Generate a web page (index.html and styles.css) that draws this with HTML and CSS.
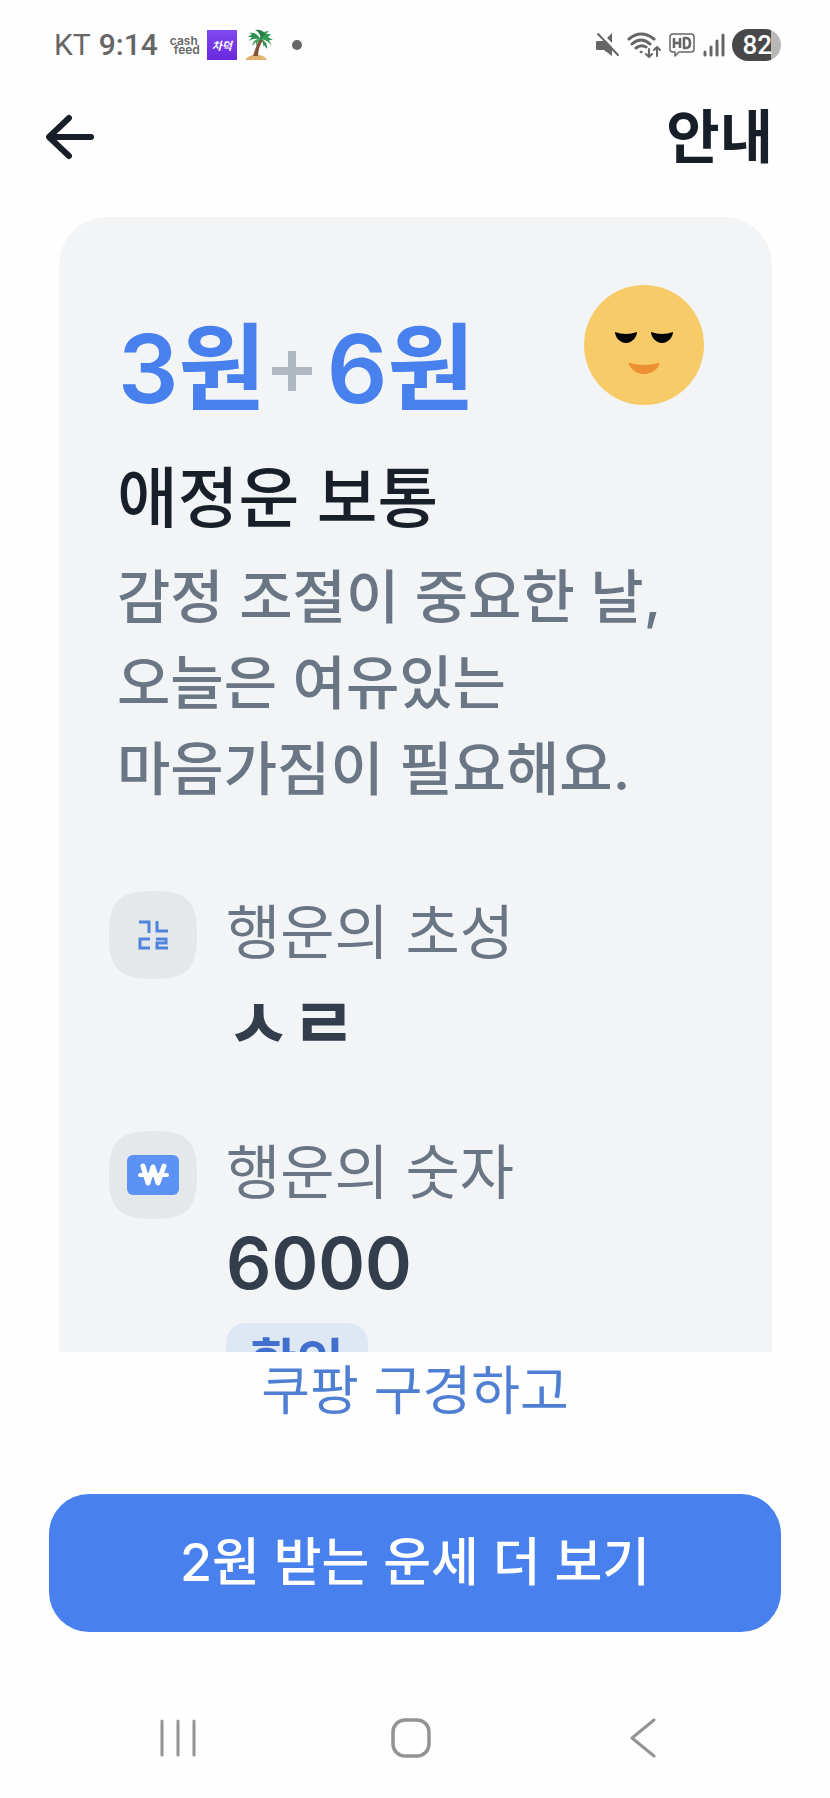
FILE: index.html
```html
<!DOCTYPE html>
<html lang="ko">
<head>
<meta charset="utf-8">
<meta name="viewport" content="width=device-width, initial-scale=1">
<title>안내</title>
<link rel="stylesheet" href="styles.css">
</head>
<body>
<div class="app">
  <div class="status">
    <div class="status-left">
      <span class="carrier">KT</span>
      <span class="clock">9:14</span>
      <span class="cashfeed"><span>cash</span><span class="feed">feed</span></span>
      <span class="chadeok">차덕</span>
      <svg class="palm" width="30" height="32" viewBox="0 0 30 32" aria-hidden="true">
        <path d="M1 31Q4 26 12 26Q21 26 23 31Z" fill="#e2b273"/>
        <path d="M9 27Q12 17 16 9L19 11Q14 19 14 27Z" fill="#854e39"/>
        <path d="M17 11Q12 2 5 4L8 5L4 8L8 8L5 12Q11 8 17 11Z" fill="#2f8f4e"/>
        <path d="M18 10Q10 8 8 17L12 13L12 18Q13 12 18 10Z" fill="#3ca45c"/>
        <path d="M16 10Q17 2 25 2L22 5L27 5L24 8L29 11L25 11L28 17Q24 11 16 10Z" fill="#349a54"/>
        <path d="M17 10Q16 3 11 1Q18 0 21 5Z" fill="#277b43"/>
        <path d="M16 9Q24 13 23 20L20 16L19 18Q20 13 16 9Z" fill="#2f8f4e"/>
      </svg>
      <span class="dot"></span>
    </div>
    <div class="status-right">
      <svg width="24" height="26" viewBox="0 0 24 26" aria-hidden="true">
        <path d="M1 9H8L16 1V24L8 18H1Q0 18 0 17V10Q0 9 1 9Z" fill="#666"/>
        <path d="M2 -1L24 21" stroke="#fff" stroke-width="3"/>
        <path d="M2 2L22 23" stroke="#666" stroke-width="2" stroke-linecap="round"/>
      </svg>
      <svg width="34" height="28" viewBox="0 0 34 28" fill="none" stroke="#666" stroke-width="3" stroke-linecap="round" stroke-linejoin="round" aria-hidden="true">
        <path d="M2 8Q14-2 27 8M5 13Q14 5 23 13M9 17Q14 13 19 16"/>
        <circle cx="14" cy="21" r="1" fill="#666" stroke-width="1"/>
        <path d="M22 18V26M19 23L22 26L25 23M30 25V16M27 19L30 16L33 19" stroke-width="2"/>
      </svg>
      <svg width="28" height="26" viewBox="0 0 28 26" fill="none" stroke="#666" stroke-width="2" stroke-linejoin="round" aria-hidden="true">
        <path d="M5 2H23Q26 2 26 5V17Q26 20 23 20H11L7 24V20H5Q2 20 2 17V5Q2 2 5 2Z" stroke-width="1.5"/>
        <path d="M6 6V16M12 6V16M6 11H12M16 6V16H18Q22 16 22 11Q22 6 18 6Z" stroke-width="2.5"/>
      </svg>
      <svg width="22" height="24" viewBox="0 0 22 24" stroke="#666" stroke-width="3" stroke-linecap="round" aria-hidden="true">
        <path d="M2 19V22M8 14V22M14 8V22M20 2V22"/>
      </svg>
      <span class="battery">82</span>
    </div>
  </div>

  <header class="header">
    <button class="icon-button" type="button" aria-label="뒤로">
      <svg width="48" height="46" viewBox="0 0 48 46" fill="none" stroke="#191f28" stroke-width="6" stroke-linecap="round" stroke-linejoin="round" aria-hidden="true">
        <path d="M23 4L3 23L23 42M4 23H45"/>
      </svg>
    </button>
    <h1 class="title">안내</h1>
  </header>

  <main class="card">
    <div class="summary">
      <p class="amount"><span>3원</span><svg class="plus" width="40" height="40" viewBox="0 0 40 40" role="img" aria-label="더하기"><path d="M20 0V40M0 20H40" stroke="#b0b8c1" stroke-width="8"/></svg><span>6원</span></p>
      <svg class="face" width="120" height="120" viewBox="0 0 120 120" aria-hidden="true">
        <circle cx="60" cy="60" r="60" fill="#f6cb68"/>
        <path d="M31 47Q42 51 53 47C53 52 48 58 42 58C36 58 31 52 31 47ZM67 47Q78 51 89 47C89 52 84 58 78 58C72 58 67 52 67 47Z" fill="#000"/>
        <path d="M45 78Q60 82 75 78C77 78 72 89 60 89C49 89 43 78 45 78Z" fill="#ed8f32"/>
      </svg>
    </div>
    <h2 class="fortune">애정운 보통</h2>
    <p class="description">감정 조절이 중요한 날,<br>오늘은 여유있는<br>마음가짐이 필요해요.</p>

    <dl class="lucky">
      <div class="lucky-row">
        <svg class="lucky-icon" viewBox="0 0 88 88" aria-hidden="true">
          <path d="M44 0C78 0 88 10 88 44S78 88 44 88S0 78 0 44S10 0 44 0Z" fill="#e5e8eb"/>
          <path d="M30 31H40V42M48 30V40H59" fill="none" stroke="#5084dc" stroke-width="3"/>
          <path d="M41 48H31V57H41M47 48H57V52H48V57H59" fill="none" stroke="#5084dc" stroke-width="3"/>
        </svg>
        <div class="lucky-text">
          <dt>행운의 초성</dt>
          <dd>ㅅㄹ</dd>
        </div>
      </div>
      <div class="lucky-row">
        <svg class="lucky-icon" viewBox="0 0 88 88" aria-hidden="true">
          <path d="M44 0C78 0 88 10 88 44S78 88 44 88S0 78 0 44S10 0 44 0Z" fill="#e5e8eb"/>
          <rect x="18" y="24" width="52" height="40" rx="6" fill="#5b92f3"/>
          <path d="M34 35L39 52L44 36L49 52L55 35" fill="none" stroke="#fff" stroke-width="5" stroke-linecap="round" stroke-linejoin="round"/>
          <path d="M31 44H58" stroke="#fff" stroke-width="4" stroke-linecap="round"/>
        </svg>
        <div class="lucky-text">
          <dt>행운의 숫자</dt>
          <dd>6000</dd>
          <dd class="badge">확인</dd>
        </div>
      </div>
    </dl>
  </main>

  <footer class="actions">
    <p class="hint">쿠팡 구경하고</p>
    <button class="primary" type="button">2원 받는 운세 더 보기</button>
  </footer>

  <nav class="system-nav" aria-label="시스템">
    <button class="icon-button" type="button" aria-label="최근 앱">
      <svg width="40" height="40" viewBox="0 0 40 40" fill="none" stroke="#939393" stroke-width="3" stroke-linecap="round" aria-hidden="true"><path d="M4 3V37M20 3V37M36 3V37"/></svg>
    </button>
    <button class="icon-button" type="button" aria-label="홈">
      <svg width="40" height="40" viewBox="0 0 40 40" fill="none" stroke="#939393" stroke-width="3.5" aria-hidden="true"><rect x="2" y="2" width="36" height="36" rx="12"/></svg>
    </button>
    <button class="icon-button" type="button" aria-label="이전">
      <svg width="40" height="40" viewBox="0 0 40 40" fill="none" stroke="#939393" stroke-width="3" stroke-linecap="round" stroke-linejoin="round" aria-hidden="true"><path d="M31 2L9 20L31 38"/></svg>
    </button>
  </nav>
</div>
</body>
</html>
```
FILE: styles.css
```css
* {
  box-sizing: border-box;
}

body,
h1,
h2,
p,
dl,
dt,
dd {
  margin: 0;
}

body {
  background: #fefefe;
  color: #191f28;
  font-family: Inter, "Noto Sans CJK KR", sans-serif;
}

button {
  border: 0;
  font-family: inherit;
}

svg {
  display: block;
  flex: none;
}

.app {
  display: flex;
  flex-direction: column;
  height: 100vh;
}

.status {
  display: flex;
  flex: none;
  align-items: center;
  justify-content: space-between;
  height: 90px;
  padding: 0 49px 0 54px;
  color: #666;
  font-family: Roboto, sans-serif;
}

.status-left,
.status-right {
  display: flex;
  align-items: center;
}

.status-right {
  gap: 7px;
}

.carrier,
.clock {
  font-size: 30px;
  line-height: 36px;
}

.clock {
  margin-left: 8px;
  font-weight: 500;
}

.cashfeed {
  display: flex;
  flex-direction: column;
  margin-left: 12px;
  font: 600 12px/9px Inter, sans-serif;
}

.feed {
  padding-left: 4px;
}

.chadeok {
  width: 30px;
  margin-left: 7px;
  background: linear-gradient(#8148f0, #6a28df);
  color: #fff;
  font: italic 700 11px/30px "Noto Sans CJK KR", sans-serif;
  text-align: center;
}

.palm {
  margin-left: 7px;
}

.dot {
  width: 10px;
  height: 10px;
  margin-left: 18px;
  border-radius: 50%;
  background: #666;
}

.battery {
  padding: 0 9px 0 10px;
  border-radius: 16px;
  background: linear-gradient(90deg, #484848 80%, #b7b7b7 80%);
  color: #fff;
  font-size: 26px;
  font-weight: 500;
  line-height: 32px;
}

.header {
  display: flex;
  flex: none;
  align-items: center;
  justify-content: space-between;
  height: 94px;
  padding: 0 57px 0 46px;
}

.icon-button {
  padding: 0;
  background: none;
}

.title {
  font-size: 58px;
  font-weight: 700;
  line-height: 80px;
}

.card {
  flex: 1;
  min-height: 0;
  margin: 33px 58px 0 59px;
  padding: 68px 68px 0 50px;
  overflow: hidden;
  border-radius: 48px 48px 0 0;
  background: #f2f4f6;
}

.summary {
  display: flex;
  align-items: flex-start;
  justify-content: space-between;
  padding-left: 9px;
}

.amount {
  display: flex;
  align-items: center;
  padding-top: 24px;
  color: #4880ee;
  font-size: 95px;
  font-weight: 600;
  line-height: 120px;
}

.plus {
  margin: 4px 15px 0 6px;
}

.fortune {
  margin-top: 25px;
  padding-left: 8px;
  font-size: 66px;
  font-weight: 500;
  line-height: 88px;
}

.description {
  margin-top: 12px;
  padding-left: 8px;
  color: #6b7684;
  font-size: 58px;
  font-weight: 500;
  line-height: 86px;
}

.lucky {
  display: flex;
  flex-direction: column;
  gap: 60px;
  margin-top: 79px;
}

.lucky-row {
  display: flex;
  align-items: flex-start;
  gap: 29px;
}

.lucky-icon {
  width: 88px;
  height: 88px;
}

.lucky-text dt {
  color: #6b7684;
  font-size: 59px;
  line-height: 84px;
}

.lucky-text dd {
  color: #333d4b;
  font-size: 71px;
  font-weight: 600;
  line-height: 96px;
}

.lucky-text .badge {
  width: fit-content;
  margin-top: 12px;
  padding: 0 24px;
  border-radius: 20px;
  background: #dee8f5;
  color: #416fcd;
  font-size: 51px;
  line-height: 80px;
}

.actions {
  display: flex;
  flex: none;
  flex-direction: column;
  gap: 64px;
  padding: 0 49px 46px;
}

.hint {
  color: #4f7fd3;
  font-size: 53px;
  line-height: 78px;
  text-align: center;
}

.primary {
  padding: 31px 20px;
  border-radius: 40px;
  background: #4880ee;
  color: #fff;
  font-size: 52px;
  font-weight: 500;
  line-height: 76px;
}

.system-nav {
  display: flex;
  flex: none;
  align-items: center;
  justify-content: space-between;
  height: 120px;
  padding: 0 167px 0 158px;
}
```
